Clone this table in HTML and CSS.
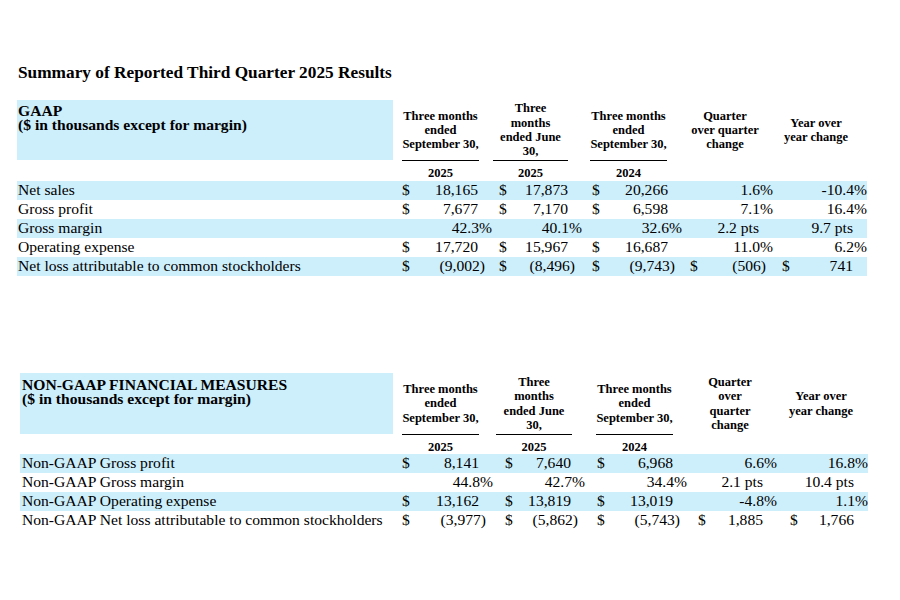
FILE: index.html
```html
<!DOCTYPE html>
<html lang="en">
<head>
<meta charset="utf-8">
<title>Summary of Reported Third Quarter 2025 Results</title>
<link rel="stylesheet" href="styles.css">
</head>
<body>
<div class="page">
  <h1 class="title">Summary of Reported Third Quarter 2025 Results</h1>

  <table class="fin t1">
    <colgroup>
      <col class="w-lab"><col class="w-d1"><col class="w-v1"><col class="w-d2"><col class="w-v2"><col class="w-d3"><col class="w-v3"><col class="w-d4"><col class="w-v4"><col class="w-d5"><col class="w-v5">
    </colgroup>
    <tr class="hd">
      <th class="lab"><span class="ln">GAAP</span><span class="ln">($ in thousands except for margin)</span></th>
      <th colspan="2" class="c1">Three months<br>ended<br>September 30,</th>
      <th colspan="2" class="c2">Three<br>months<br>ended June<br>30,</th>
      <th colspan="2" class="c3">Three months<br>ended<br>September 30,</th>
      <th colspan="2" class="c4">Quarter<br>over quarter<br>change</th>
      <th colspan="2" class="c5">Year over<br>year change</th>
    </tr>
    <tr class="yr">
      <td></td>
      <td colspan="2" class="c1"><div class="u">2025</div></td>
      <td colspan="2" class="c2"><div class="u">2025</div></td>
      <td colspan="2" class="c3"><div class="u">2024</div></td>
      <td colspan="2" class="c4"></td>
      <td colspan="2" class="c5"></td>
    </tr>
    <tr class="r b">
      <td class="l">Net sales</td>
      <td>$</td><td class="n">18,165</td>
      <td>$</td><td class="n">17,873</td>
      <td>$</td><td class="n">20,266</td>
      <td></td><td class="pc">1.6%</td>
      <td></td><td class="pc">-10.4%</td>
    </tr>
    <tr class="r">
      <td class="l">Gross profit</td>
      <td>$</td><td class="n">7,677</td>
      <td>$</td><td class="n">7,170</td>
      <td>$</td><td class="n">6,598</td>
      <td></td><td class="pc">7.1%</td>
      <td></td><td class="pc">16.4%</td>
    </tr>
    <tr class="r b">
      <td class="l">Gross margin</td>
      <td></td><td class="pc">42.3%</td>
      <td></td><td class="pc">40.1%</td>
      <td></td><td class="pc">32.6%</td>
      <td></td><td class="pt">2.2 pts</td>
      <td></td><td class="pt">9.7 pts</td>
    </tr>
    <tr class="r">
      <td class="l">Operating expense</td>
      <td>$</td><td class="n">17,720</td>
      <td>$</td><td class="n">15,967</td>
      <td>$</td><td class="n">16,687</td>
      <td></td><td class="pc">11.0%</td>
      <td></td><td class="pc">6.2%</td>
    </tr>
    <tr class="r b">
      <td class="l">Net loss attributable to common stockholders</td>
      <td>$</td><td class="ng">(9,002)</td>
      <td>$</td><td class="ng">(8,496)</td>
      <td>$</td><td class="ng">(9,743)</td>
      <td>$</td><td class="ng">(506)</td>
      <td>$</td><td class="n">741</td>
    </tr>
  </table>

  <table class="fin t2">
    <colgroup>
      <col class="w-lab"><col class="w-d1"><col class="w-v1"><col class="w-d2"><col class="w-v2"><col class="w-d3"><col class="w-v3"><col class="w-d4"><col class="w-v4"><col class="w-d5"><col class="w-v5">
    </colgroup>
    <tr class="hd">
      <th class="lab"><span class="ln">NON-GAAP FINANCIAL MEASURES</span><span class="ln">($ in thousands except for margin)</span></th>
      <th colspan="2" class="c1">Three months<br>ended<br>September 30,</th>
      <th colspan="2" class="c2">Three<br>months<br>ended June<br>30,</th>
      <th colspan="2" class="c3">Three months<br>ended<br>September 30,</th>
      <th colspan="2" class="c4">Quarter<br>over<br>quarter<br>change</th>
      <th colspan="2" class="c5">Year over<br>year change</th>
    </tr>
    <tr class="yr">
      <td></td>
      <td colspan="2" class="c1"><div class="u">2025</div></td>
      <td colspan="2" class="c2"><div class="u">2025</div></td>
      <td colspan="2" class="c3"><div class="u">2024</div></td>
      <td colspan="2" class="c4"></td>
      <td colspan="2" class="c5"></td>
    </tr>
    <tr class="r b">
      <td class="l">Non-GAAP Gross profit</td>
      <td>$</td><td class="n">8,141</td>
      <td>$</td><td class="n">7,640</td>
      <td>$</td><td class="n">6,968</td>
      <td></td><td class="pc">6.6%</td>
      <td></td><td class="pc">16.8%</td>
    </tr>
    <tr class="r">
      <td class="l">Non-GAAP Gross margin</td>
      <td></td><td class="pc">44.8%</td>
      <td></td><td class="pc">42.7%</td>
      <td></td><td class="pc">34.4%</td>
      <td></td><td class="pt">2.1 pts</td>
      <td></td><td class="pt">10.4 pts</td>
    </tr>
    <tr class="r b">
      <td class="l">Non-GAAP Operating expense</td>
      <td>$</td><td class="n">13,162</td>
      <td>$</td><td class="n">13,819</td>
      <td>$</td><td class="n">13,019</td>
      <td></td><td class="pc">-4.8%</td>
      <td></td><td class="pc">1.1%</td>
    </tr>
    <tr class="r">
      <td class="l">Non-GAAP Net loss attributable to common stockholders</td>
      <td>$</td><td class="ng">(3,977)</td>
      <td>$</td><td class="ng">(5,862)</td>
      <td>$</td><td class="ng">(5,743)</td>
      <td>$</td><td class="n">1,885</td>
      <td>$</td><td class="n">1,766</td>
    </tr>
  </table>
</div>
</body>
</html>
```

FILE: styles.css
```css
* { box-sizing: border-box; }

body {
  margin: 0;
  background: #fff;
  color: #000;
  font-family: "Liberation Serif", "Times New Roman", serif;
}

.page {
  padding-top: 63px;
}

.title {
  margin: 0 0 0 18px;
  font-size: 17.3px;
  line-height: 20px;
  font-weight: bold;
}

.fin {
  border-collapse: collapse;
  border-spacing: 0;
  table-layout: fixed;
}

.t1 { margin: 17px 0 0 17px; width: 850px; }
.t2 { margin: 97px 0 0 20px; width: 848px; }

/* column widths, top table */
.t1 .w-lab { width: 376px; }
.t1 .w-d1 { width: 19px; }
.t1 .w-v1 { width: 80px; }
.t1 .w-d2 { width: 15px; }
.t1 .w-v2 { width: 75px; }
.t1 .w-d3 { width: 17px; }
.t1 .w-v3 { width: 83px; }
.t1 .w-d4 { width: 15px; }
.t1 .w-v4 { width: 76px; }
.t1 .w-d5 { width: 16px; }
.t1 .w-v5 { width: 78px; }

/* column widths, bottom table */
.t2 .w-lab { width: 373px; }
.t2 .w-d1 { width: 19px; }
.t2 .w-v1 { width: 81px; }
.t2 .w-d2 { width: 20px; }
.t2 .w-v2 { width: 72px; }
.t2 .w-d3 { width: 19px; }
.t2 .w-v3 { width: 83px; }
.t2 .w-d4 { width: 18px; }
.t2 .w-v4 { width: 72px; }
.t2 .w-d5 { width: 20px; }
.t2 .w-v5 { width: 71px; }

/* header row */
.t1 .hd { height: 60px; }
.t2 .hd { height: 61px; }

.hd th {
  padding: 0;
  font-size: 12.5px;
  line-height: 14.3px;
  font-weight: bold;
  text-align: center;
  vertical-align: middle;
  white-space: nowrap;
}

.hd th.lab {
  background: #cdeefb;
  text-align: left;
  vertical-align: top;
  font-size: 15.6px;
  line-height: 14px;
  padding: 4px 0 0 1px;
}

.lab .ln {
  display: block;
  height: 14px;
}

.t2 .hd th.lab { padding-left: 2px; padding-top: 5px; }

/* header column paddings (shared by year row) */
.t1 .c1 { padding-left: 9px; padding-right: 13px; }
.t1 .c2 { padding-left: 1px; padding-right: 14px; }
.t1 .c3 { padding-left: 8px; padding-right: 15px; }
.t1 .c4 { padding-right: 5px; }
.t1 .c5 { padding-right: 8px; }

.t2 .c1 { padding-left: 9px; padding-right: 14px; }
.t2 .c2 { padding-left: 3px; padding-right: 13px; }
.t2 .c3 { padding-left: 11px; padding-right: 14px; }
.t2 .c4 { padding-right: 4px; }
.t2 .c5 { padding-right: 3px; }

.hd th.c1, .hd th.c2, .hd th.c3, .hd th.c4, .hd th.c5 { padding-top: 0; padding-bottom: 0; }

/* year row */
.yr td {
  padding-top: 0;
  padding-bottom: 0;
  vertical-align: top;
}

.yr .u {
  border-top: 1px solid #000;
  padding-top: 5px;
  font-size: 12.5px;
  line-height: 14px;
  font-weight: bold;
  text-align: center;
}

.t1 .yr .u { padding-bottom: 1px; }

/* data rows */
.r td {
  padding: 0 0 2px;
  font-size: 15.6px;
  line-height: 17px;
  white-space: nowrap;
  text-align: right;
  vertical-align: top;
}

.r td.l { text-align: left; padding-left: 1px; }
.t2 .r td.l { padding-left: 2px; }

.b td { background: #cdeefb; }

/* dollar-sign cells */
.t1 .r td:nth-child(2) { text-align: left; padding-left: 9px; }
.t1 .r td:nth-child(4) { text-align: left; padding-left: 7px; }
.t1 .r td:nth-child(6) { text-align: left; padding-left: 10px; }
.t1 .r td:nth-child(8) { text-align: left; padding-left: 8px; }
.t1 .r td:nth-child(10) { text-align: left; padding-left: 9px; }

.t2 .r td:nth-child(2) { text-align: left; padding-left: 9px; }
.t2 .r td:nth-child(4) { text-align: left; padding-left: 12px; }
.t2 .r td:nth-child(6) { text-align: left; padding-left: 12px; }
.t2 .r td:nth-child(8) { text-align: left; padding-left: 11px; }
.t2 .r td:nth-child(10) { text-align: left; padding-left: 13px; }

/* value alignment: percentages define the right edge */
.r .n { padding-right: 14px; }
.r .ng { padding-right: 7px; }
.r .pt { padding-right: 14px; }
.r .pc { padding-right: 0; }
```
